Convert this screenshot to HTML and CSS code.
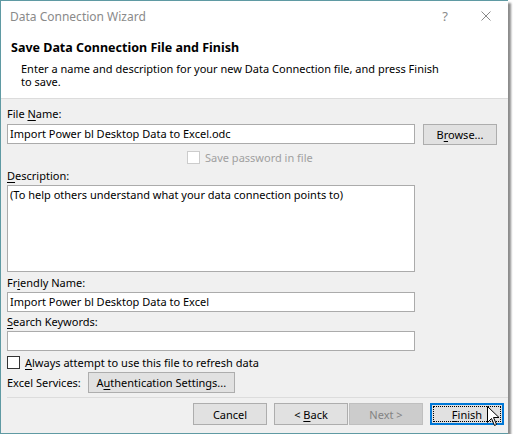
FILE: index.html
```html
<!DOCTYPE html>
<html lang="en">
  <head>
    <meta charset="UTF-8" />
    <title>Data Connection Wizard</title>
    <link rel="stylesheet" href="styles.css">
  </head>
  <body>
    <div class="window">
      <div class="titlebar">
        <span class="title">Data Connection Wizard</span>
        <span class="help">?</span>
        <svg class="close" width="10" height="10" viewBox="0 0 10 10">
          <path d="M0.5 0.5 L9.5 9.5 M9.5 0.5 L0.5 9.5" stroke="#8a8a8a" stroke-width="1" fill="none" />
        </svg>
      </div>

      <div class="header">
        <h1>Save Data Connection File and Finish</h1>
        <p>Enter a name and description for your new Data Connection file, and press Finish to save.</p>
      </div>

      <div class="content">
        <div class="lbl">File <u>N</u>ame:</div>
        <div class="file-row">
          <div class="box field">Import Power bl Desktop Data to Excel.odc</div>
          <button class="btn browse">B<u>r</u>owse...</button>
        </div>

        <div class="check-row pwd">
          <span class="check disabled"></span>
          <span>Save password in file</span>
        </div>

        <div class="lbl desc-lbl"><u>D</u>escription:</div>
        <div class="box area">(To help others understand what your data connection points to)</div>

        <div class="lbl friendly-lbl">Fr<u>i</u>endly Name:</div>
        <div class="box field">Import Power bl Desktop Data to Excel</div>

        <div class="lbl search-lbl"><u>S</u>earch Keywords:</div>
        <div class="box field"></div>

        <div class="check-row always">
          <span class="check"></span>
          <span><u>A</u>lways attempt to use this file to refresh data</span>
        </div>

        <div class="services">
          <span>Excel Services:</span>
          <button class="btn auth">A<u>u</u>thentication Settings...</button>
        </div>

        <div class="footer">
          <button class="btn wide">Cancel</button>
          <button class="btn wide back">&lt; <u>B</u>ack</button>
          <button class="btn wide off">Next &gt;</button>
          <button class="btn wide finish"><span class="focus"><u>F</u>inish</span></button>
          <svg class="cursor" width="13" height="21" viewBox="0 0 13 21">
            <path d="M0.5 0.5 L0.5 16.5 L4.5 12.5 L7.5 19.5 L9.5 18.5 L6.5 11.5 L12 11.5 Z" fill="#fff" stroke="#000" stroke-width="1" />
          </svg>
        </div>
      </div>
    </div>
  </body>
</html>
```

FILE: styles.css
```css
body {
  margin: 0;
  background: #fff;
  font-family: "Noto Sans", "Open Sans", sans-serif;
  font-size: 11px;
  color: #000;
}
u {
  text-decoration-thickness: 1px;
  text-underline-offset: 2px;
}
.window {
  width: 507px;
  height: 432px;
  border-left: 1px solid #5f9aa3;
  border-top: 1px solid #5f9aa3;
  border-bottom: 1px solid #5f9aa3;
  box-shadow: 3px 3px 2px rgba(0, 0, 0, 0.45);
  background: #f0f0f0;
  display: flex;
  flex-direction: column;
  overflow: hidden;
}
.titlebar {
  height: 30px;
  background: #fff;
  display: flex;
  align-items: center;
  padding-left: 9px;
  color: #8a8a8a;
  font-size: 12px;
}
.title {
  flex: 1;
  padding-top: 1px;
}
.help {
  margin-right: 33px;
  font-size: 13px;
}
.close {
  margin-right: 17px;
}
.header {
  background: #fff;
  height: 67px;
  border-bottom: 1px solid #dcdcdc;
}
.header h1 {
  margin: 8px 0 0 10px;
  font-size: 12.5px;
  font-weight: bold;
  line-height: 18px;
}
.header p {
  margin: 5px 0 0 20px;
  width: 430px;
  line-height: 13px;
}
.content {
  padding: 7px 0 0 6px;
}
.lbl {
  line-height: 16px;
  height: 16px;
  margin-bottom: 2px;
}
.box {
  background: #fff;
  border: 1px solid #ababab;
  box-sizing: border-box;
  width: 408px;
  padding: 0 2px;
}
.field {
  height: 20px;
  line-height: 18px;
}
.area {
  height: 87px;
  line-height: 17px;
}
.file-row {
  display: flex;
  align-items: flex-start;
}
.btn {
  font: inherit;
  background: #e1e1e1;
  border: 1px solid #adadad;
  box-sizing: border-box;
  height: 21px;
  padding: 0;
  color: #000;
}
.browse {
  width: 74px;
  margin-left: 8px;
}
.check-row {
  display: flex;
  align-items: center;
  height: 14px;
}
.check {
  width: 13px;
  height: 13px;
  box-sizing: border-box;
  border: 1px solid #333;
  background: #fff;
  margin-right: 5px;
}
.pwd {
  margin-top: 5px;
  padding-left: 180px;
  color: #a0a0a0;
}
.check.disabled {
  border-color: #cccccc;
}
.desc-lbl {
  margin-top: 4px;
  margin-bottom: 1px;
}
.friendly-lbl {
  margin-top: 3px;
  margin-bottom: 1px;
}
.search-lbl {
  margin-top: 2px;
  margin-bottom: 1px;
}
.always {
  margin-top: 4px;
}
.services {
  display: flex;
  align-items: center;
  margin-top: 3px;
}
.auth {
  width: 147px;
  margin-left: 7px;
}
.footer {
  position: relative;
  margin-top: 4px;
  border-top: 1px solid #dcdcdc;
  padding: 5px 0 5px 186px;
  display: flex;
}
.wide {
  width: 74px;
  height: 22px;
}
.back {
  margin-left: 7px;
}
.off {
  margin-left: 1px;
  background: #cccccc;
  border-color: #bfbfbf;
  color: #838383;
}
.finish {
  margin-left: 7px;
  border: 2px solid #0078d7;
  background: #e1e1e1;
  padding: 1px;
}
.focus {
  display: block;
  height: 100%;
  box-sizing: border-box;
  border: 1px dotted #000;
  line-height: 16px;
}
.cursor {
  position: absolute;
  left: 480px;
  top: 8px;
}
```
